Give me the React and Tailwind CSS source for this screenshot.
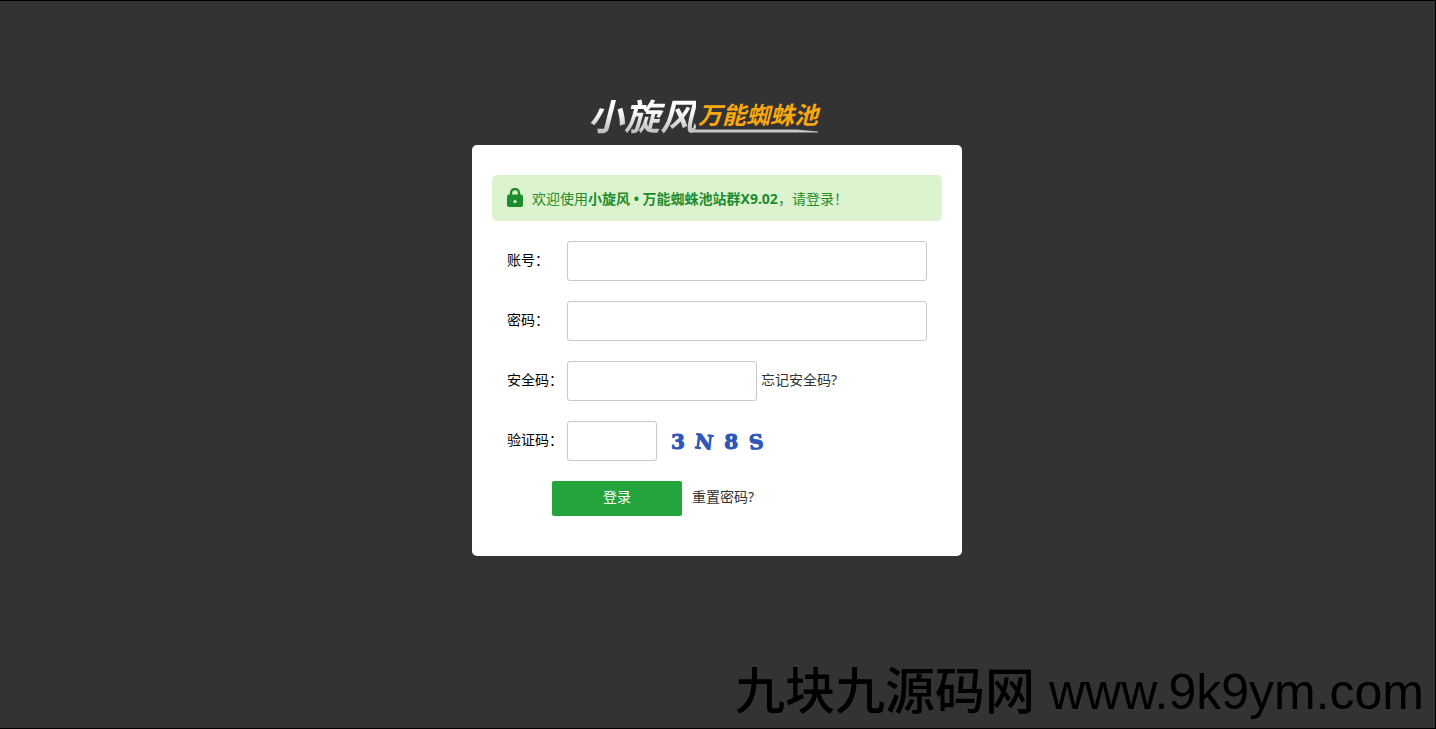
const fields = [
  { id: "account", label: "账号：", type: "text", width: "w-full" },
  { id: "password", label: "密码：", type: "password", width: "w-full" },
  {
    id: "safecode",
    label: "安全码：",
    type: "password",
    width: "w-[190px]",
    extra: (
      <a href="#" className="ml-1 shrink-0 pb-0.5 text-[#333]">
        忘记安全码?
      </a>
    ),
  },
  {
    id: "captcha",
    label: "验证码：",
    type: "text",
    width: "w-[90px]",
    extra: <Captcha />,
  },
];

function Logo() {
  return (
    <h1 className="relative flex items-end pr-7 italic leading-none whitespace-nowrap">
      <span className="mr-0.5 bg-linear-to-b from-white from-30% to-[#b4b8b8] bg-clip-text text-4xl leading-9 font-bold text-transparent">
        小旋风
      </span>
      <span className="pb-1.5 text-2xl leading-7 font-bold text-[#f9a80f]">
        万能蜘蛛池
      </span>
      {/* Swoosh under the product name */}
      <svg
        className="absolute right-7 bottom-0.5 h-1 w-[126px]"
        viewBox="0 0 126 4"
        aria-hidden="true"
      >
        <path d="M1 0.5H104L126 2.5V3.5H0Z" fill="#c3c8c6" />
      </svg>
    </h1>
  );
}

function LockIcon() {
  return (
    <svg className="h-5 w-4 shrink-0" viewBox="0 0 16 20" aria-hidden="true">
      <path d="M4 9V5a4 4 0 0 1 8 0V9" fill="none" stroke="#1c8c2c" strokeWidth="2.4" />
      <rect y="6.5" width="16" height="12.5" rx="2" fill="#1c8c2c" />
      <circle cx="8" cy="13.5" r="1.6" fill="#dcf3d0" />
    </svg>
  );
}

function Captcha() {
  return (
    <button
      type="button"
      aria-label="刷新验证码"
      className="ml-3.5 flex h-10 w-[92px] items-center justify-between pt-0.5 font-['DejaVu_Serif',serif] text-xl font-bold text-[#2f55b8] [-webkit-text-stroke:1px_#2f55b8]"
    >
      <span>3</span>
      <span className="rotate-6">N</span>
      <span>8</span>
      <span className="-rotate-6">S</span>
    </button>
  );
}

export default function App() {
  return (
    <div className="flex min-h-screen flex-col items-center border-y border-r border-black bg-[#333] pt-[98px] pr-px font-['Noto_Sans','Noto_Sans_CJK_SC',sans-serif] text-sm text-black">
      <Logo />

      <main className="mt-2.5 w-full max-w-[490px] rounded-[5px] bg-white px-5 pt-[30px] pb-10">
        <div className="flex h-[46px] items-center gap-[9px] rounded-[5px] bg-[#dcf3d0] px-[15px] text-[#1c8c2c]">
          <LockIcon />
          <p className="pt-0.5">
            欢迎使用<b>小旋风 • 万能蜘蛛池站群X9.02</b>，请登录！
          </p>
        </div>

        <form className="mt-5 px-[15px]">
          <div className="flex flex-col gap-5">
            {fields.map((f) => (
              <div key={f.id} className="flex h-10 items-center">
                <label htmlFor={f.id} className="w-[60px] shrink-0 pb-0.5">
                  {f.label}
                </label>
                <input
                  id={f.id}
                  type={f.type}
                  className={`h-10 rounded-[3px] border border-[#c8c8c8] bg-white px-2.5 outline-none ${f.width}`}
                />
                {f.extra}
              </div>
            ))}
          </div>

          <div className="mt-5 flex items-center pl-[45px]">
            <button
              type="submit"
              className="h-[35px] w-[130px] rounded-xs bg-[#23a43c] pb-1 text-white"
            >
              登录
            </button>
            <a href="#" className="ml-2.5 pb-1 text-[#333]">
              重置密码?
            </a>
          </div>
        </form>
      </main>

      {/* Site watermark */}
      <div className="pointer-events-none fixed right-3 bottom-1 font-['Liberation_Sans','Noto_Sans_CJK_SC',sans-serif] text-[50px] leading-[66px] font-medium whitespace-nowrap text-black">
        九块九源码网 www.9k9ym.com
      </div>
    </div>
  );
}
